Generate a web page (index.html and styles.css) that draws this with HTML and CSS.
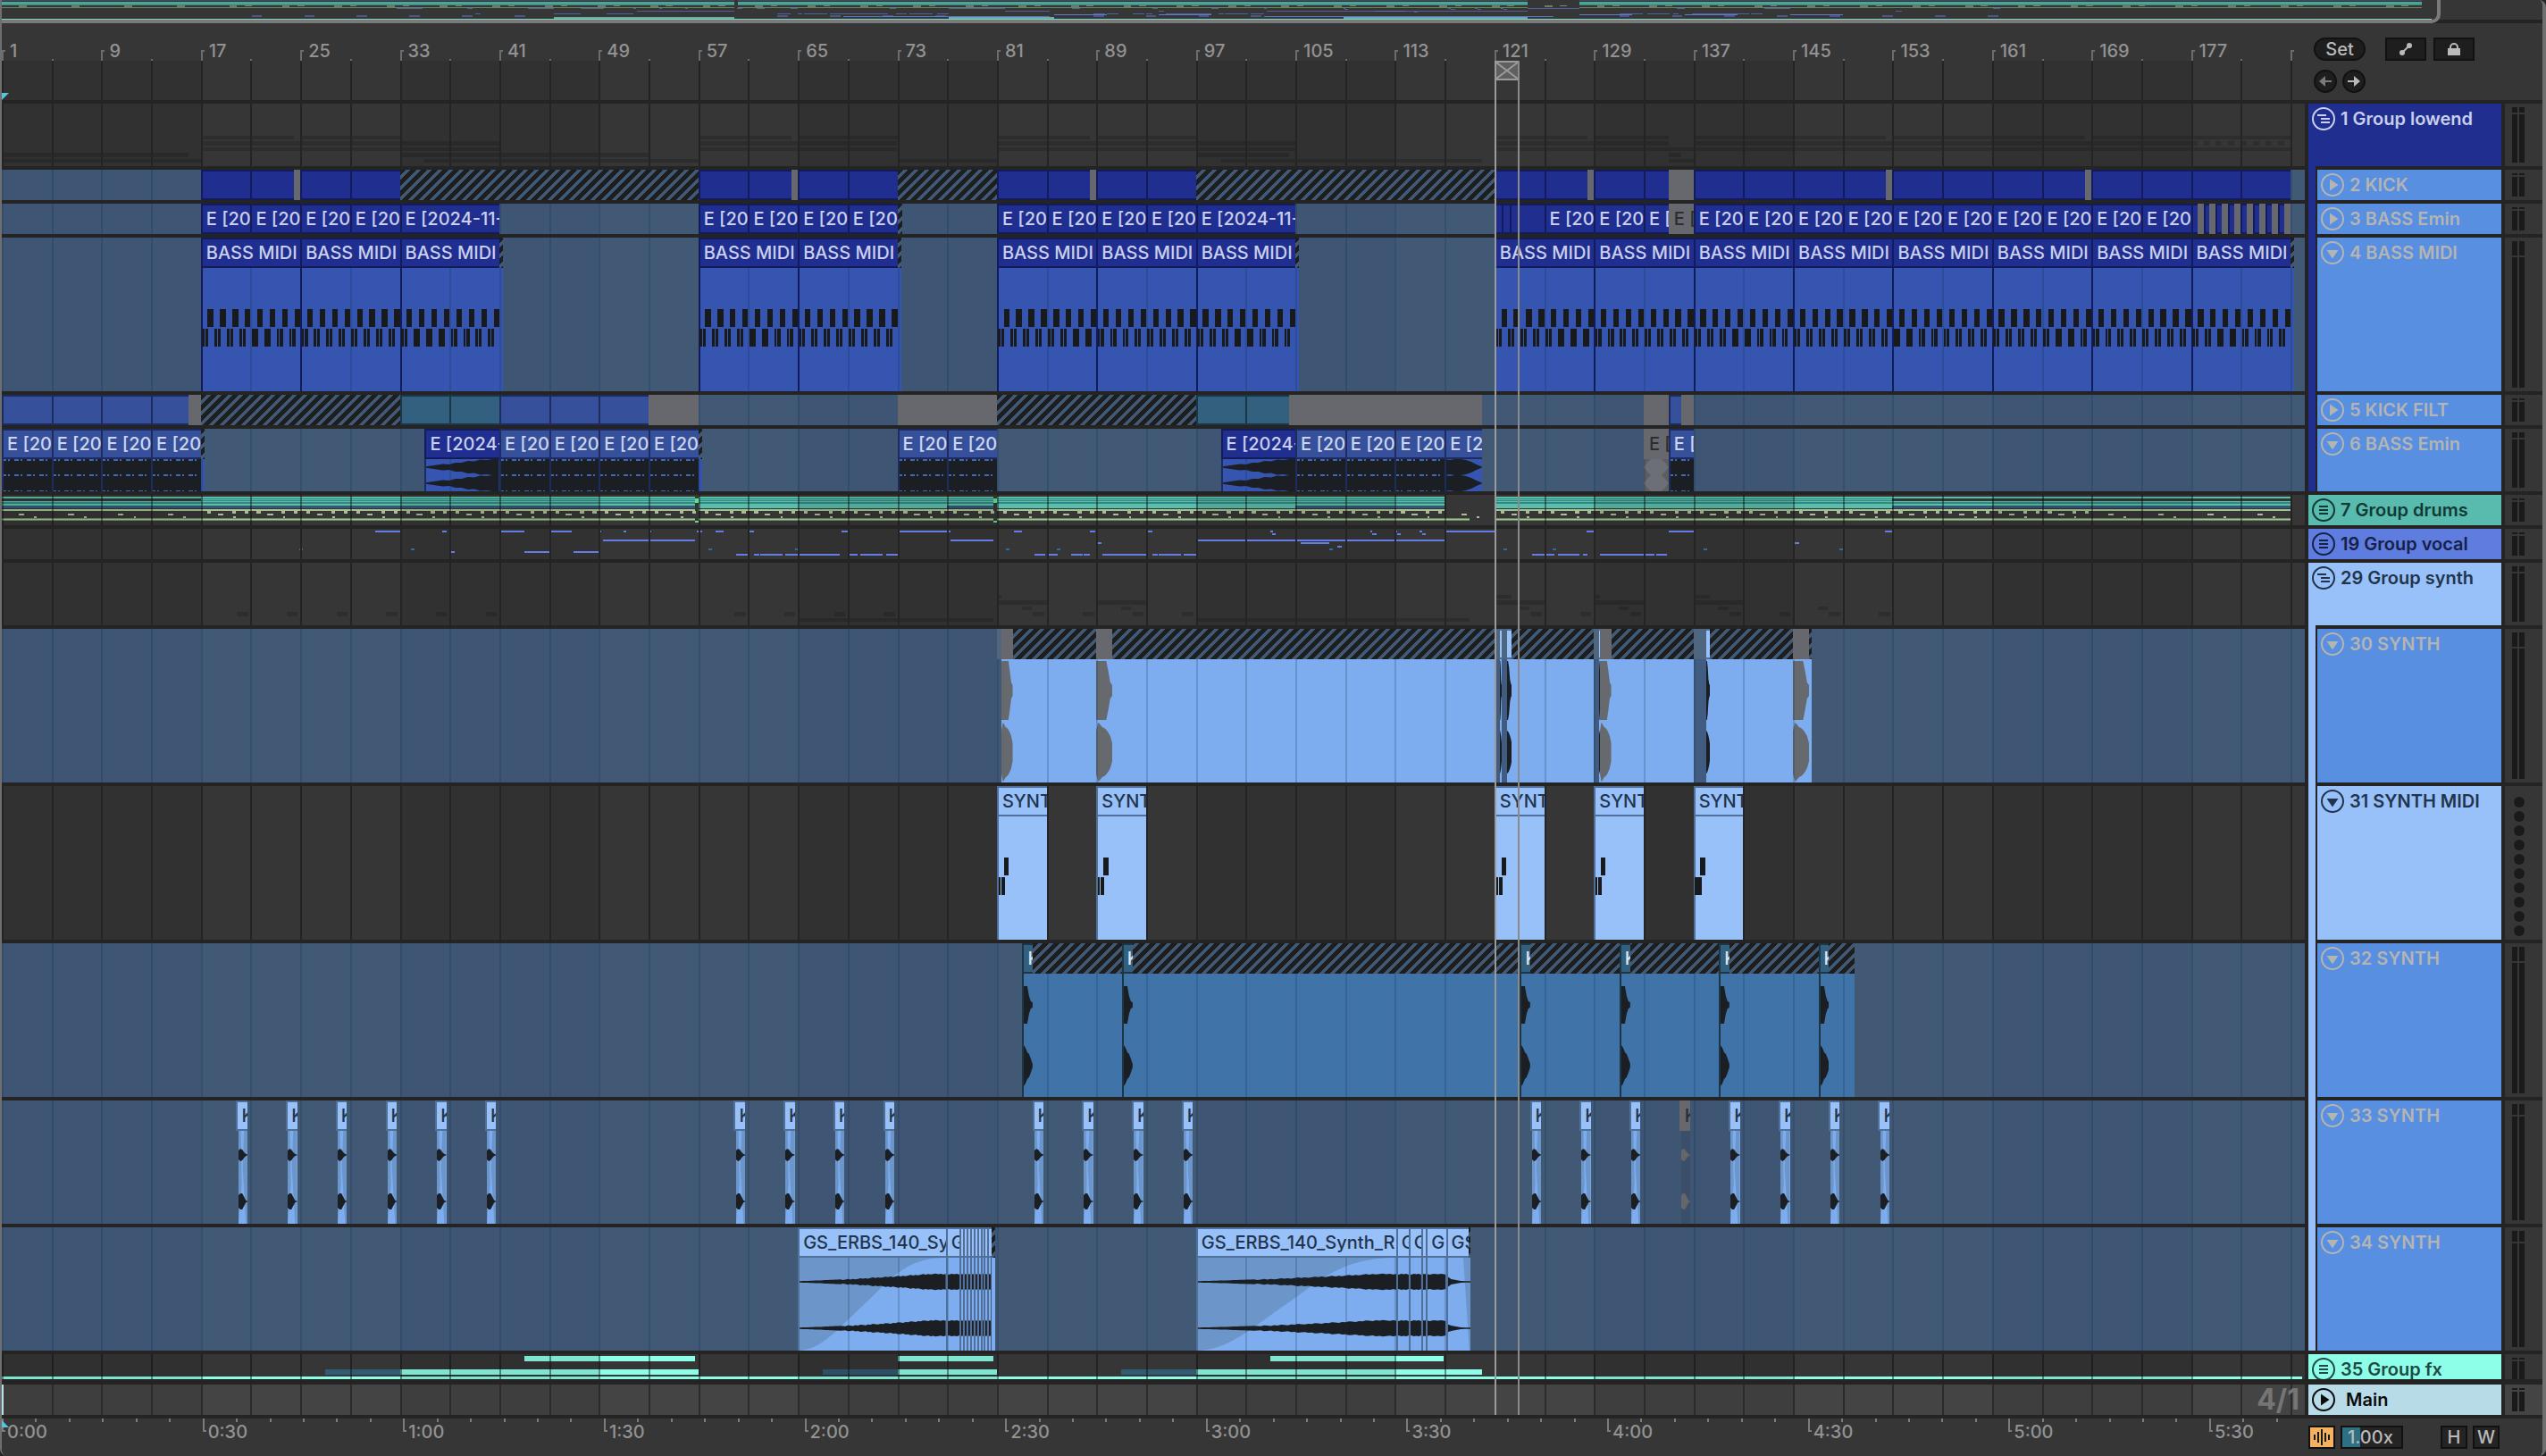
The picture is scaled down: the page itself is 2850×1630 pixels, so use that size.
FILE: index.html
```html
<!DOCTYPE html>
<html lang="en">
<head>
<meta charset="utf-8">
<title>Arrangement</title>
<link rel="stylesheet" href="styles.css">
</head>
<body>
<svg class="defs" aria-hidden="true">
  <symbol id="i-open" viewBox="0 0 26 26"><circle cx="13" cy="13" r="12" fill="none" stroke="currentColor" stroke-width="2"/><path d="M6 9h10M10 13h10M10 17h10" stroke="currentColor" stroke-width="2"/></symbol>
  <symbol id="i-closed" viewBox="0 0 26 26"><circle cx="13" cy="13" r="12" fill="none" stroke="currentColor" stroke-width="2"/><path d="M8 9h10M8 13h10M8 17h10" stroke="currentColor" stroke-width="2"/></symbol>
  <symbol id="i-play" viewBox="0 0 26 26"><circle cx="13" cy="13" r="12" fill="none" stroke="currentColor" stroke-width="2"/><path d="M10 6.500L19.500 13L10 19.500Z" fill="currentColor"/></symbol>
  <symbol id="i-down" viewBox="0 0 26 26"><circle cx="13" cy="13" r="12" fill="none" stroke="currentColor" stroke-width="2"/><path d="M6.500 10H19.500L13 19.500Z" fill="currentColor"/></symbol>
</svg>
<div class="app">
  <div class="overview">
    <div class="overview-map" id="map"></div>
  </div>

  <main class="arrangement">
    <div class="row ruler-row">
      <div class="ruler" id="ruler"></div>
      <div class="tools">
        <div class="tools-line">
          <button class="btn pill">Set</button>
          <button class="btn wide first" aria-label="Automation"><svg width="18" height="18" viewBox="0 0 18 18"><path d="M5 13L13 5" stroke="currentColor" stroke-width="2"/><circle cx="5" cy="13" r="3" fill="currentColor"/><circle cx="13" cy="5" r="3" fill="currentColor"/></svg></button>
          <button class="btn wide" aria-label="Lock"><svg width="16" height="16" viewBox="0 0 16 16"><path d="M1 7H15V15H1Z" fill="currentColor"/><path d="M4 8V6a4 4 0 0 1 8 0V8" fill="none" stroke="currentColor" stroke-width="2"/></svg></button>
        </div>
        <div class="tools-line tight">
          <button class="btn round off" aria-label="Back"><svg width="16" height="14" viewBox="0 0 16 14"><path d="M1 7L8 1V13Z" fill="currentColor"/><path d="M6 7H15" stroke="currentColor" stroke-width="2"/></svg></button>
          <button class="btn round" aria-label="Forward"><svg width="16" height="14" viewBox="0 0 16 14"><path d="M15 7L8 1V13Z" fill="currentColor"/><path d="M1 7H10" stroke="currentColor" stroke-width="2"/></svg></button>
        </div>
      </div>
    </div>

    <section class="row h70"><div class="lane gray" id="t1"></div><div class="head navy"><button class="fold" aria-label="Fold"><svg><use href="#i-open"/></svg></button><span>1 Group lowend</span></div><div class="meter"></div></section>
    <section class="row h34"><div class="lane" id="t2"></div><div class="nest low"><i class="stripe"></i><div class="head blue"><button class="fold" aria-label="Unfold"><svg><use href="#i-play"/></svg></button><span>2 KICK</span></div></div><div class="meter"></div></section>
    <section class="row h34"><div class="lane" id="t3"></div><div class="nest low"><i class="stripe"></i><div class="head blue"><button class="fold" aria-label="Unfold"><svg><use href="#i-play"/></svg></button><span>3 BASS Emin</span></div></div><div class="meter"></div></section>
    <section class="row h172"><div class="lane" id="t4"></div><div class="nest low"><i class="stripe"></i><div class="head blue"><button class="fold" aria-label="Fold"><svg><use href="#i-down"/></svg></button><span>4 BASS MIDI</span></div></div><div class="meter"></div></section>
    <section class="row h34"><div class="lane" id="t5"></div><div class="nest low"><i class="stripe"></i><div class="head blue"><button class="fold" aria-label="Unfold"><svg><use href="#i-play"/></svg></button><span>5 KICK FILT</span></div></div><div class="meter"></div></section>
    <section class="row h70"><div class="lane" id="t6"></div><div class="nest low"><i class="stripe"></i><div class="head blue"><button class="fold" aria-label="Fold"><svg><use href="#i-down"/></svg></button><span>6 BASS Emin</span></div></div><div class="meter"></div></section>
    <section class="row h34"><div class="lane gray over" id="t7"></div><div class="head teal"><button class="fold" aria-label="Unfold"><svg><use href="#i-closed"/></svg></button><span>7 Group drums</span></div><div class="meter"></div></section>
    <section class="row h34"><div class="lane gray" id="t19"></div><div class="head violet"><button class="fold" aria-label="Unfold"><svg><use href="#i-closed"/></svg></button><span>19 Group vocal</span></div><div class="meter"></div></section>
    <section class="row h70"><div class="lane gray" id="t29"></div><div class="head sky"><button class="fold" aria-label="Fold"><svg><use href="#i-open"/></svg></button><span>29 Group synth</span></div><div class="meter"></div></section>
    <section class="row h172"><div class="lane" id="t30"></div><div class="nest syn"><i class="stripe"></i><div class="head blue"><button class="fold" aria-label="Fold"><svg><use href="#i-down"/></svg></button><span>30 SYNTH</span></div></div><div class="meter"></div></section>
    <section class="row h172"><div class="lane gray" id="t31"></div><div class="nest syn"><i class="stripe"></i><div class="head sky"><button class="fold" aria-label="Fold"><svg><use href="#i-down"/></svg></button><span>31 SYNTH MIDI</span></div></div><div class="meter dots"></div></section>
    <section class="row h172"><div class="lane" id="t32"></div><div class="nest syn"><i class="stripe"></i><div class="head blue"><button class="fold" aria-label="Fold"><svg><use href="#i-down"/></svg></button><span>32 SYNTH</span></div></div><div class="meter"></div></section>
    <section class="row h138"><div class="lane" id="t33"></div><div class="nest syn"><i class="stripe"></i><div class="head blue"><button class="fold" aria-label="Fold"><svg><use href="#i-down"/></svg></button><span>33 SYNTH</span></div></div><div class="meter"></div></section>
    <section class="row h138"><div class="lane" id="t34"></div><div class="nest syn"><i class="stripe"></i><div class="head blue"><button class="fold" aria-label="Fold"><svg><use href="#i-down"/></svg></button><span>34 SYNTH</span></div></div><div class="meter"></div></section>
    <section class="row h28"><div class="lane gray over" id="t35"></div><div class="head mint"><button class="fold" aria-label="Unfold"><svg><use href="#i-closed"/></svg></button><span>35 Group fx</span></div><div class="meter"></div></section>
    <section class="row h34 main-row"><div class="lane main-lane" id="tm"><span class="fraction">4/1</span></div><div class="head pale"><button class="fold" aria-label="Unfold"><svg><use href="#i-play"/></svg></button><span class="main-name">Main</span></div><div class="meter"></div></section>

    <div class="selection-layer"><div class="selection" id="selection"><svg viewBox="0 0 26 18" preserveAspectRatio="none"><path d="M0 0L26 18M26 0L0 18" stroke="#9b9b9b" stroke-width="2"/></svg></div></div>
  </main>

  <footer class="row footer">
    <div class="times" id="times"></div>
    <div class="footer-tools">
      <button class="btn orange" aria-label="Waveform zoom"><svg width="22" height="20" viewBox="0 0 22 20"><path d="M3 7V13M7 4V16M11 1V19M15 5V15M19 7V13" stroke="#1a1a1a" stroke-width="2"/></svg></button>
      <input class="zoom" value="1.00x" aria-label="Zoom factor">
      <span class="grow"></span>
      <button class="btn key">H</button>
      <button class="btn key">W</button>
    </div>
  </footer>
</div>
<script src="script.js"></script>
</body>
</html>
```
FILE: styles.css
```css
* { box-sizing: border-box; }
body {
  margin: 0;
  background: #242424;
  font-family: Inter, "Liberation Sans", sans-serif;
  font-size: 20px;
  line-height: 24px;
  font-weight: 500;
}
button, input { font: inherit; margin: 0; padding: 0; }
.defs { position: absolute; width: 0; height: 0; }

.app {
  min-height: 100vh;
  background: #242424;
  border-left: 2px solid #6f6f6f;
  border-right: 4px solid #6f6f6f;
  border-radius: 0 8px 8px 8px;
  overflow: hidden;
}

/* overview strip */
.overview { background: #363636; height: 26px; border-bottom: 4px solid #242424; }
.overview-map {
  position: relative;
  width: 96%;
  height: 26px;
  border-right: 4px solid #7a7a7a;
  border-bottom: 4px solid #7a7a7a;
  border-radius: 0 0 10px 0;
}

/* rows */
.arrangement { position: relative; display: grid; gap: 4px; }
.row { display: grid; grid-template-columns: minmax(0, 1fr) 216px 42px; grid-template-rows: minmax(0, 1fr); gap: 4px; }
.h28 { height: 28px; }
.h34 { height: 34px; --cap: 2px; }
.h70 { height: 70px; --cap: 6px; }
.h138 { height: 138px; --cap: 12px; }
.h172 { height: 172px; --cap: 16px; }
.main-row { margin-top: 2px; }

/* bar ruler */
.ruler-row { grid-template-columns: minmax(0, 1fr) 262px; height: 86px; background: #363636; }
.ruler { position: relative; overflow: hidden; }
.ruler-grid { position: absolute; left: 0; right: 0; top: 42px; bottom: 0; }
.num { position: absolute; top: 19px; padding-left: 9px; color: #929292; }
.tick { position: absolute; top: 30px; width: 4px; height: 12px; border-left: 2px solid #6c6c6c; border-top: 2px solid #6c6c6c; }
.tick.minor { top: 40px; height: 2px; width: 2px; }
.start-mark { position: absolute; left: 0; bottom: 0; border-top: 8px solid #58c4dc; border-right: 8px solid transparent; z-index: 3; }

.tools { padding: 16px 6px; display: grid; gap: 10px; align-content: start; }
.tools-line { display: flex; gap: 8px; }
.tools-line.tight { gap: 6px; }
.btn {
  height: 26px;
  display: flex;
  align-items: center;
  justify-content: center;
  background: #1e1e1e;
  border: 2px solid #111;
  color: #bababa;
}
.pill { width: 58px; border-radius: 13px; }
.wide { width: 46px; }
.wide.first { margin-left: 14px; }
.round { width: 26px; border-radius: 13px; }
.off { color: #7a7a7a; }

/* lanes */
.lane { position: relative; overflow: hidden; background: #425976; --line: rgba(10, 40, 80, .2); --shade: rgba(20, 40, 80, .07); }
.lane.gray { background: #363636; --line: #242424; --shade: rgba(0, 0, 0, .08); }
.main-lane { background: #444; --line: #2b2b2b; --shade: rgba(0, 0, 0, .08); }
.shade, .line, .clip, .body, .mark, .hatch { position: absolute; top: 0; bottom: 0; }
.shade { background: var(--shade, rgba(0, 0, 0, .08)); }
.over .shade { z-index: 4; background: rgba(0, 0, 0, .1); }
.line { width: 2px; background: var(--line, #242424); z-index: 2; }
.over .line { z-index: 5; background: rgba(10, 10, 10, .45); }
.body { top: 34px; z-index: 1; }
.body svg { position: absolute; left: 0; top: 0; width: 100%; height: 100%; display: block; }
.clip {
  height: 34px;
  bottom: auto;
  z-index: 3;
  overflow: hidden;
  white-space: nowrap;
  padding: 3px 0 0 4px;
  border: solid;
  border-width: 2px 0 2px 2px;
}
.clip.edge { z-index: 2; top: 34px; height: auto; bottom: 0; padding: 0; border-width: 0 0 0 2px; background: none; }
.c-navy { background: #202e90; border-color: #121b5c; color: #c9cfec; }
.c-blue { background: #36509b; border-color: #1d2b5e; color: #ccd5ec; }
.c-teal { background: #346080; border-color: #1b3647; color: #dce6ee; }
.c-light { background: #98c1fa; border-color: #50709a; color: #22344c; }
.c-off { background: #66686d; border-color: #66686d; color: #2b2d31; }
.c-slate { background: #4e6680; border-color: #4e6680; }
.hatch {
  height: 34px;
  bottom: auto;
  z-index: 3;
  background: linear-gradient(135deg, #1c1e20 28%, #425976 28% 50%, #1c1e20 50% 78%, #425976 78%) 0 0 / 12px 12px;
}
.b-royal { background: #3555b0; }
.b-light { background: #7dadee; }
.b-pale { background: #98c1fa; }
.b-steel { background: #4074a8; }
.b-dim { background: #415c80; }
.b-shadow { background: #3b4f6b; }
.b-off { background: #5c5e62; }
.b-wave {
  background:
    repeating-linear-gradient(90deg, #4068b8 0 5px, transparent 5px 7px, #4068b8 7px 9px, transparent 9px 14px) 0 0 / 100% 2px no-repeat,
    repeating-linear-gradient(90deg, #4068b8 0 5px, transparent 5px 7px, #4068b8 7px 9px, transparent 9px 14px) 0 17px / 100% 2px no-repeat,
    repeating-linear-gradient(90deg, #4068b8 0 5px, transparent 5px 7px, #4068b8 7px 9px, transparent 9px 14px) 0 100% / 100% 1px no-repeat,
    #1b1e23;
}
.note { position: absolute; background: #181a1c; z-index: 3; }
.mark { bottom: auto; z-index: 1; }
.m-faint { background: rgba(0, 0, 0, .16); }
.m-teal { background: #58bfae; }
.m-deep { background: #35877e; }
.m-sea { background: #325a75; }
.m-green { background: #a5c092; }
.m-moss { background: #6f8a63; }
.m-lime { background: #5fe08f; }
.m-violet { background: #647de6; }
.m-azure { background: #2f6aa8; }
.m-mint { background: #8dffe9; }
.fraction { position: absolute; right: 6px; top: 2px; font-size: 32px; line-height: 30px; font-weight: 700; color: #757575; z-index: 6; }
.cursor { position: absolute; left: 0; top: 0; bottom: 0; width: 2px; background: #b9e0ea; z-index: 6; }

/* track headers */
.nest { display: grid; grid-template-columns: 8px minmax(0, 1fr); gap: 2px; }
.stripe { margin-top: -4px; }
.low .stripe { background: #202e90; }
.syn .stripe { background: #98c1fa; }
.head { display: flex; align-items: flex-start; gap: 6px; padding: 4px; overflow: hidden; font-weight: 600; line-height: 26px; white-space: nowrap; }
.fold { width: 26px; height: 26px; flex: none; border: 0; background: none; color: inherit; }
.fold svg { display: block; width: 26px; height: 26px; }
.navy { background: #202e90; color: #c9cfec; }
.blue { background: #588fe0; color: #b4b4b4; }
.teal { background: #58bbae; color: #123a35; }
.violet { background: #5f7dde; color: #16204a; }
.sky { background: #98c1fa; color: #22344c; }
.mint { background: #8dffe9; color: #1f4a43; }
.pale { background: #b8dbe8; color: #0c0c0c; }
.main-name { padding-left: 6px; }

/* meters */
.meter { background: #363636; padding: 4px 8px; display: grid; grid-template-columns: 6px 6px; grid-template-rows: var(--cap, 2px) minmax(0, 1fr); gap: 2px; }
.h28 .meter { padding-bottom: 0; }
.main-row .meter { background: #444; }
.meter i { background: #1a1a1a; }
.meter.dots { grid-template-columns: 12px; grid-template-rows: none; grid-auto-rows: 12px; gap: 4px; padding: 12px 10px 0; }
.meter.dots i { border-radius: 50%; }

/* selected range */
.selection-layer { position: absolute; left: 0; right: 266px; top: 42px; bottom: 0; z-index: 8; pointer-events: none; }
.selection { position: absolute; top: 0; bottom: 0; border-left: 2px solid #9b9b9b; border-right: 2px solid #8a8a8a; }
.selection svg { display: block; width: 100%; height: 22px; background: #5f5f5f; border-top: 2px solid #9b9b9b; border-bottom: 2px solid #9b9b9b; }

/* time ruler */
.footer { margin-top: 4px; background: #363636; height: 42px; }
.footer { grid-template-columns: minmax(0, 1fr) 262px; }
.times { position: relative; overflow: hidden; }
.time { position: absolute; top: 3px; padding-left: 6px; color: #929292; }
.sec { position: absolute; top: 0; width: 2px; height: 4px; background: #7c7c7c; }
.sec.major { width: 4px; height: 15px; background: none; border-left: 2px solid #7c7c7c; border-bottom: 2px solid #7c7c7c; }
.time-mark { position: absolute; left: 0; top: 2px; border-bottom: 8px solid #58c4dc; border-right: 8px solid transparent; }
.footer-tools { display: flex; gap: 6px; padding: 8px 48px 0 0; }
.grow { flex: 1; }
.orange { width: 30px; background: #f5b162; }
.key { width: 30px; background: #242424; }
.zoom { width: 70px; height: 26px; border: 2px solid #111; padding-left: 6px; color: #bababa; background: linear-gradient(90deg, #2f6f83 20px, #242424 20px); }
```
FILE: script.js
```js
// Lanes are measured in bars; positions are percentages of the visible range.
const BARS = 185.15;
const SECONDS = 344.3;
const x = b => `${((b - 1) / BARS * 100).toFixed(4)}%`;
const w = (a, b) => `${((b - a) / BARS * 100).toFixed(4)}%`;
const $ = id => document.getElementById(id);
const put = (id, html) => $(id).insertAdjacentHTML('beforeend', html);

const span = (cls, a, b, extra = '', inner = '') =>
  `<div class="${cls}" style="left:${x(a)};width:${w(a, b)};${extra}">${inner}</div>`;
const clip = (id, a, b, color, text = '') => put(id, span(`clip c-${color}`, a, b, '', text));
const hatch = (id, a, b) => put(id, span('hatch', a, b));
const body = (id, a, b, color, inner = '') => put(id, span(`body b-${color}`, a, b, '', inner));
const edge = (id, b, color) => put(id, span(`clip edge c-${color}`, b, b + 1, 'background:none'));
const mark = (id, a, b, top, h, color) => put(id, span(`mark m-${color}`, a, b, `top:${top}px;height:${h}px`));
const note = (id, a, b, top, h) => put(id, span('note', a, b, `top:${top}px;height:${h}px`));
const series = (a, b, step) => { const out = []; for (let v = a; v < b; v += step) out.push(v); return out; };

// Mirrored waveform around each centre; amps are spread evenly over the width.
function wave(height, parts, color = '#1b1e22', under = '') {
  const polys = parts.map(([cy, amps]) => {
    const n = amps.length - 1;
    const up = amps.map((v, i) => `${(i / n * 100).toFixed(2)},${(cy - v).toFixed(1)}`);
    const down = amps.map((v, i) => `${(i / n * 100).toFixed(2)},${(cy + v).toFixed(1)}`).reverse();
    return `<polygon fill="${color}" points="${up.concat(down).join(' ')}"/>`;
  }).join('');
  return `<svg viewBox="0 0 100 ${height}" preserveAspectRatio="none">${under}${polys}</svg>`;
}

// Grid and shading
function grid(el) {
  let html = '';
  for (let b = 1; b < 186; b += 32) html += span('shade', b, Math.min(b + 16, 186));
  for (let b = 1; b < 186; b += 4) html += `<i class="line" style="left:${x(b)}"></i>`;
  el.insertAdjacentHTML('beforeend', html);
}
document.querySelectorAll('.lane').forEach(grid);
document.querySelectorAll('.meter').forEach(m => { m.innerHTML = '<i></i>'.repeat(m.classList.contains('dots') ? 10 : 4); });

put('ruler', '<div class="ruler-grid" id="rgrid"></div>');
grid($('rgrid'));
put('rgrid', '<i class="start-mark"></i>');
for (let b = 1; b <= 185; b += 4) {
  const major = (b - 1) % 8 === 0;
  put('ruler', `<i class="tick${major ? '' : ' minor'}" style="left:${x(b)}"></i>`);
  if (major && b < 185) put('ruler', `<span class="num" style="left:${x(b)}">${b}</span>`);
}
$('selection').style.left = x(121);
$('selection').style.width = w(121, 123);
put('tm', '<i class="cursor"></i>');

for (let s = 0; s < 344; s += 5) {
  const left = `${(s / SECONDS * 100).toFixed(4)}%`;
  const major = s % 30 === 0;
  put('times', `<i class="sec${major ? ' major' : ''}" style="left:${left}"></i>`);
  if (major) put('times', `<span class="time" style="left:${left}">${Math.floor(s / 60)}:${String(s % 60).padStart(2, '0')}</span>`);
}
put('times', '<i class="time-mark"></i>');

// 2 KICK
[[17, 33], [57, 73], [81, 97], [121, 185]].forEach(([a, b]) => series(a, b, 4).forEach(v => clip('t2', v, v + 4, 'navy')));
[[24.5, 25], [64.5, 65], [88.5, 89], [128.5, 129], [135, 137], [152.5, 153], [168.5, 169]].forEach(([a, b]) => clip('t2', a, b, 'off'));
[[33, 57], [73, 81], [97, 121]].forEach(([a, b]) => hatch('t2', a, b));

// 3 BASS Emin
const short = 'E [202';
const tiny = 'E [';
[17, 21, 25, 29, 57, 61, 65, 69, 81, 85, 89, 93, 125, 129, ...series(137, 177, 4)].forEach(v => clip('t3', v, v + 4, 'navy', short));
[33, 97].forEach(v => clip('t3', v, v + 8, 'navy', 'E [2024-11-'));
clip('t3', 121, 121.8, 'navy'); clip('t3', 121.6, 122.3, 'navy'); clip('t3', 122.2, 125, 'navy');
clip('t3', 133, 135, 'navy', tiny);
clip('t3', 135, 137, 'off', tiny);
hatch('t3', 73, 73.4);
series(177, 185, 1).forEach(v => { clip('t3', v, v + .5, 'navy'); clip('t3', v + .5, v + 1, 'off'); });

// 4 BASS MIDI
[[17, 41], [57, 73], [81, 105], [121, 185]].forEach(([a, b]) => {
  body('t4', a, b + .3, 'royal');
  series(a, b, 8).forEach(v => { clip('t4', v, v + 8, 'navy', 'BASS MIDI'); edge('t4', v, 'navy'); });
  hatch('t4', b, b + .3);
  series(a, b, 1).forEach(v => {
    note('t4', v + .55, v + 1, 80, 20);
    note('t4', v + .1, v + .3, 102, 20);
    note('t4', v + .36, v + .6, 102, 20);
  });
});

// 5 KICK FILT
[[1, 5], [5, 9], [9, 13], [13, 16], [41, 45], [45, 49], [49, 53], [135, 136]].forEach(([a, b]) => clip('t5', a, b, 'blue'));
[[33, 37], [37, 41], [97, 101], [101, 104.5]].forEach(([a, b]) => clip('t5', a, b, 'teal'));
[[16, 17], [53, 57], [73, 81], [104.5, 120], [133, 135], [136, 137]].forEach(([a, b]) => clip('t5', a, b, 'off'));
hatch('t5', 17, 33); hatch('t5', 81, 97);

// 6 BASS Emin
[1, 5, 9, 13, 41, 45, 49, 53, 73, 77, 105, 109, 113].forEach(v => { clip('t6', v, v + 4, 'blue', short); body('t6', v, v + 4, 'wave'); edge('t6', v, 'blue'); });
const rise = [.5, 1.5, 2.5, 3.5, 3, 5, 5, 7, 6.5, 8.5, 8, 9, 9];
[35, 99].forEach(v => {
  clip('t6', v, v + 6, 'navy', 'E [2024-');
  body('t6', v, v + 6, 'royal', wave(36, [[9, rise], [27, rise]]));
  edge('t6', v, 'blue');
});
clip('t6', 117, 120, 'blue', 'E [2');
const drop = [9, 8, 9, 9, 8, 6, 3, .5];
body('t6', 117, 120, 'royal', wave(36, [[9, drop], [27, drop]]));
edge('t6', 117, 'blue');
clip('t6', 133, 135, 'off', tiny);
const hump = [0, 5, 9, 9, 9, 9, 5, 0];
body('t6', 133, 135, 'off', wave(36, [[9, hump], [27, hump]], '#6c6f76'));
clip('t6', 135, 137, 'blue', tiny); body('t6', 135, 137, 'wave'); edge('t6', 135, 'blue');
[17, 57].forEach(v => { hatch('t6', v, v + .3); body('t6', v, v + .3, 'royal'); });

// 1 Group lowend: miniature of the child tracks
[[1, 16], [33, 53], [97, 104.5], [135, 136]].forEach(([a, b]) => mark('t1', a, b, 55, 5, 'faint'));
[[1, 17], [35, 57], [73, 81], [99, 120], [135, 137]].forEach(([a, b]) => mark('t1', a, b, 62, 4, 'faint'));
[[17, 24.5], [25, 33], [57, 64.5], [65, 73], [81, 88.5], [89, 97], [121, 128.5], [129, 135], [137, 152.5], [153, 168.5], [169, 185]].forEach(([a, b]) => mark('t1', a, b, 36, 4, 'faint'));
[[17, 41], [57, 73], [81, 105], [121, 135], [137, 177.5]].forEach(([a, b]) => mark('t1', a, b, 42, 5, 'faint'));
series(178, 185, 1).forEach(v => mark('t1', v, v + .5, 42, 5, 'faint'));
[[17, 41], [57, 73], [81, 105], [121, 185]].forEach(([a, b]) => mark('t1', a, b, 49, 4, 'faint'));

// 7 Group drums
[[1, 56.7], [57, 80.7], [81, 117], [121, 185]].forEach(([a, b]) => {
  mark('t7', a, b, 2, 2, 'teal');
  mark('t7', a, b, 7, 5, 'deep');
  mark('t7', a, b, 7, 1, 'teal');
  mark('t7', a, b, 10, 2, 'teal');
  mark('t7', a, b, 16, 2, 'green');
  mark('t7', a, b === 117 ? 119 : b, 26, 3, 'moss');
  mark('t7', a, b === 117 ? 119 : b, 27, 1, 'green');
});
[[17, 56.7], [57, 80.7], [81, 117], [121, 153]].forEach(([a, b]) => { mark('t7', a, b, 4, 3, 'deep'); mark('t7', a, b, 5, 1, 'teal'); });
[[1, 56.7], [77, 80.7], [105, 117], [153, 185]].forEach(([a, b]) => mark('t7', a, b, 12, 3, 'sea'));
[[57, 77], [81, 105], [121, 153]].forEach(([a, b]) => mark('t7', a, b, 12, 3, 'teal'));
series(1, 185, 4).forEach(c => {
  if (c !== 117 && c >= 17 && c < 169) [.5, 2.5, 3.5].forEach(o => mark('t7', c + o, c + o + .3, 18, 3, 'green'));
  mark('t7', c + 1.35, c + 1.8, 21, 2, 'green');
  mark('t7', c + 2.6, c + 2.8, 24, 2, 'green');
});
[56.7, 80.7].forEach(v => { mark('t7', v, v + .3, 4, 5, 'lime'); mark('t7', v, v + .3, 29, 2, 'lime'); });

// 19 Group vocal
const vocal = {
  2: [[31, 33], [36.4, 36.8], [41, 43], [45, 46.8], [49, 49.2], [51, 51.2], [53, 53.2], [56.9, 57.3], [58.4, 59], [61, 61.5], [68.5, 69], [73, 77.3], [82.4, 83], [88.5, 88.9], [93, 93.5], [97, 97.2], [103, 103.2], [111, 111.2], [113, 113.2], [115, 115.2], [117, 121], [128.4, 129], [135, 137], [152.4, 153]],
  5: [[103.1, 103.4], [111.2, 111.5], [113.2, 113.5], [115.2, 115.5]],
  12: [[49.3, 56.7], [77.3, 80.7], [97.2, 117]],
  15: [[89, 89.4], [105.4, 107.7], [145, 145.5]],
  19: [[108.4, 108.7]],
  25: [[37, 37.4], [43, 45], [47, 49]],
  28: [[60, 61], [61.5, 61.9], [62, 63.75], [64, 68.4], [69, 69.8], [70, 71.8], [72.1, 73], [84, 84.9], [85, 85.9], [87, 87.9], [88, 88.5], [89.5, 93], [93.5, 93.9], [94, 95.8], [96, 97], [124, 125.8], [126.1, 127.8], [128.1, 128.5], [129.5, 133.9], [134, 134.9]]
};
Object.entries(vocal).forEach(([top, list]) => list.forEach(([a, b]) => mark('t19', a, b, +top, 2, 'violet')));
[25, 34, 57.9, 64.9, 81.8, 85.9, 107.8, 121.8, 125.8, 137.9, 148.8].forEach(v => mark('t19', v - .1, v + .2, 22, 2, 'azure'));

// 30 SYNTH
const burst = [[35, [33, 33, 33, 33, 33, 33, 22, 9, 6]], [104, [24, 33, 31, 28, 27, 25, 22, 18, 10]]];
const slim = [[35, [33, 33, 26, 12, 7, 6]], [104, [24, 23, 21, 18, 14, 8]]];
body('t30', 81.4, 146.5, 'light');
[[121.05, 121.45], [121.6, 122], [129, 129.4], [137, 138]].forEach(([a, b]) => body('t30', a, b, 'dim'));
[[82.3, 89], [90.3, 121], [122.4, 129], [130.4, 137], [138.3, 145], [146.3, 146.5]].forEach(([a, b]) => hatch('t30', a, b));
[[81, 81.4], [121, 122], [129, 129.4], [137, 138]].forEach(([a, b]) => clip('t30', a, b, 'slate'));
[[121.45, 121.6], [122, 122.4], [129.4, 129.55], [138, 138.3]].forEach(([a, b]) => { put('t30', span('clip c-light', a, b, 'border-left:0;padding:0')); body('t30', a, b, 'light', wave(138, slim)); });
[[81.4, 82.3], [89, 90.3], [129.5, 130.4], [145, 146.3]].forEach(([a, b]) => { clip('t30', a, b, 'off'); body('t30', a, b, 'light', wave(138, burst, '#66696e')); });

// 31 SYNTH MIDI
[81, 89, 121, 129, 137].forEach(v => {
  clip('t31', v, v + 4, 'light', 'SYNT');
  put('t31', span('body b-pale', v, v + 4, 'z-index:2'));
  edge('t31', v, 'light');
  note('t31', v + .55, v + .95, 80, 20);
  note('t31', v + .12, v + .28, 102, 20);
  note('t31', v + .34, v + .65, 102, 20);
});

// 32 SYNTH
body('t32', 83.1, 149.95, 'steel');
hatch('t32', 83.9, 149.95);
const stab = [[35, [21, 21, 21, 21, 10, 4, 3]], [103, [16, 23, 20, 15, 13, 8, 2]]];
[83.05, 91.05, 123.05, 131.05, 139.05, 147.05].forEach(v => {
  clip('t32', v, v + .85, 'teal', 'K');
  body('t32', v, v + .85, 'steel', wave(138, stab));
  edge('t32', v, 'teal');
});

// 33 SYNTH
const hits = [20, 24, 28, 32, 36, 40, 60, 64, 68, 72, 84, 88, 92, 96, 124, 128, 132, 136, 140, 144, 148, 152];
const pluck = [[27, [5, 7, 6, 3, 1, .5]], [79, [7, 9, 9, 5, 1, .5]]];
const fade = '<path d="M0 0H25L35 60L0 104ZM100 0H60L45 40L80 104H100Z" fill="#6c96ca"/>';
hits.forEach(v => {
  const off = v === 136;
  clip('t33', v - .15, v + .75, off ? 'off' : 'light', 'K');
  body('t33', v, v + .75, off ? 'shadow' : 'light', wave(104, pluck, off ? '#64666a' : '#1b1e22', off ? '' : fade));
});

// 34 SYNTH
const swell = (n, max, seed) => series(0, n, 1).map(i => {
  const t = i / (n - 1);
  return .8 + max * Math.min(1, Math.pow(t, 1.3) * 1.15) - (t > .3 ? ((i * seed) % 5) * .25 : 0);
});
const curve = '<path d="M0 0H100C72 0 62 26 45 52S16 104 0 104Z" fill="#6c96ca"/>';
const level = [[27, [9, 8, 9, 8.5, 9, 8]], [79, [9, 8, 9, 8.5, 9, 8]]];
[[65, 76.9, 'GS_ERBS_140_Sy'], [97, 113.1, 'GS_ERBS_140_Synth_R']].forEach(([a, b, text]) => {
  clip('t34', a, b, 'light', text);
  body('t34', a, b, 'light', wave(104, [[27, swell(60, 8.5, 3)], [79, swell(60, 8.5, 7)]], '#1b1e22', curve));
  edge('t34', a, 'light');
});
const cut = (a, b, text = '') => { clip('t34', a, b, 'light', text); body('t34', a, b, 'light', wave(104, level)); edge('t34', a, 'light'); };
cut(76.9, 78, 'G');
series(78, 80.5, .28).forEach(v => cut(v, v + .28));
hatch('t34', 80.6, 80.85); body('t34', 80.6, 80.85, 'light');
cut(113.1, 114.1, 'G'); cut(114.1, 115.1, 'G'); cut(115.1, 115.5); cut(115.5, 117.1, 'G');
clip('t34', 117.1, 118.95, 'light', 'GS');
body('t34', 117.1, 119.05, 'light', wave(104, [[27, [7, 3, 2, 1, .8, .8]], [79, [5, 3, 2, 1, .8, .8]]], '#1b1e22', '<path d="M70 0H100V104H95Z" fill="#6c96ca"/>'));
edge('t34', 117.1, 'light');
hatch('t34', 118.95, 119.1);

// 29 Group synth: miniature of the child tracks
[[81, 81.4], [121, 122.4], [129, 129.5], [137, 138.3]].forEach(([a, b]) => mark('t29', a, b, 36, 4, 'faint'));
[81, 89, 121, 129, 137].forEach(v => mark('t29', v, v + 4, 42, 5, 'faint'));
[83, 91, 123, 131, 139, 147].forEach(v => mark('t29', v, v + .8, 49, 4, 'faint'));
hits.filter(v => v !== 136).forEach(v => mark('t29', v - .1, v + .8, 55, 5, 'faint'));
[[65, 80.7], [97, 119]].forEach(([a, b]) => mark('t29', a, b, 62, 4, 'faint'));

// 35 Group fx
[[43, 56.7], [73, 80.7], [103, 116.9]].forEach(([a, b]) => mark('t35', a, b, 2, 6, 'mint'));
[[33, 57], [73, 81], [97, 120]].forEach(([a, b]) => mark('t35', a, b, 17, 6, 'mint'));
[[27, 33], [67, 73], [91, 97]].forEach(([a, b]) => mark('t35', a, b, 17, 6, 'sea'));
mark('t35', 1, 185.9, 25, 3, 'mint');

// Overview strip
const MAP = 185.2;
const mini = (a, b, top, h, color, alpha = 1) =>
  put('map', `<i class="mark m-${color}" style="left:${((a - 1) / MAP * 100).toFixed(3)}%;width:${((b - a) / MAP * 100).toFixed(3)}%;top:${top}px;height:${h}px;opacity:${alpha}"></i>`);
[[1, 56.7], [57, 81], [81, 117], [121, 185]].forEach(([a, b]) => {
  mini(a, b, 0, 1, 'sea', .7);
  mini(a, b, 2, 3, 'teal', .8);
  mini(a, b, 5, 1, 'deep');
  mini(a, b, 8, 1, 'moss', .9);
});
series(1, 185, 4).forEach(c => { mini(c + 1.3, c + 1.9, 6, 2, 'green', .5); if (c > 16) mini(c + 2.5, c + 3, 6, 1, 'green', .6); });
Object.entries(vocal).forEach(([top, list]) => list.forEach(([a, b]) => mini(a, b, 9 + Math.round(top / 4.5), 1, 'violet', .6)));
[81, 89, 121, 129, 137].forEach(v => mini(v, v + 4, 16, 1, 'violet', .9));
hits.forEach(v => mini(v, v + .8, 17, 2, 'violet', .45));
[[65, 80.7], [97, 119]].forEach(([a, b]) => mini(a, b, 18, 1, 'violet', .8));
[[43, 56.7], [73, 81], [103, 117]].forEach(([a, b]) => mini(a, b, 19, 2, 'mint', .6));
mini(1, 185.8, 21, 1, 'mint', .8);
```
